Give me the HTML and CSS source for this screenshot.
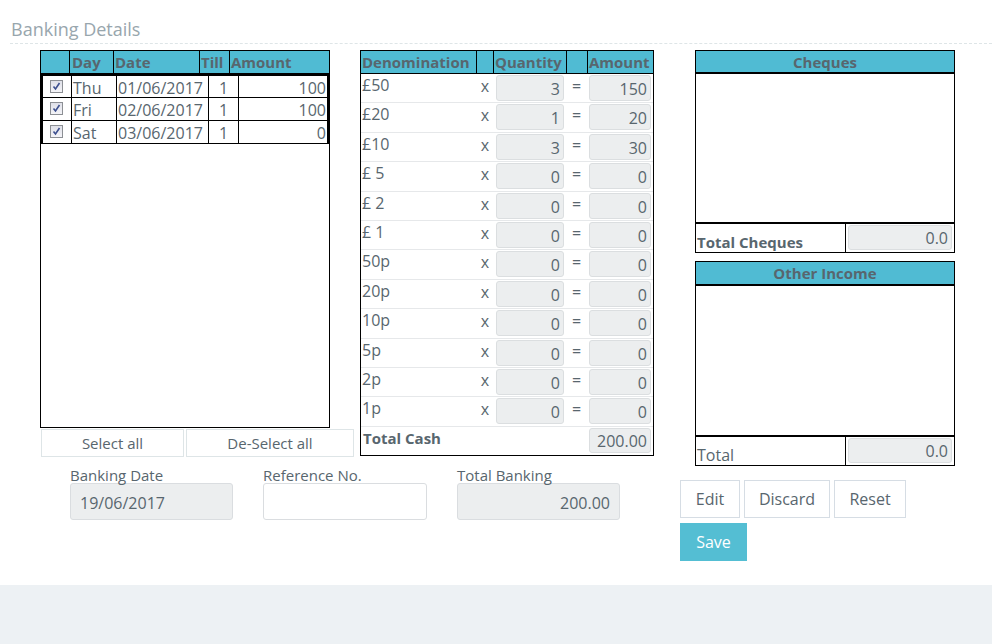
FILE: index.html
```html
<!DOCTYPE html>
<html>
<head>
<meta charset="utf-8">
<link rel="stylesheet" href="styles.css">
</head>
<body>
<div class="page">
  <h2 class="title">Banking Details</h2>
  <div class="main">
    <div class="leftmid">
      <div class="tables">
        <div class="leftcol">
          <div class="days">
            <div class="dhead">
              <div class="c1"></div>
              <div class="c2">Day</div>
              <div class="c3">Date</div>
              <div class="c4">Till</div>
              <div class="c5">Amount</div>
            </div>
            <div class="dbody">
              <div class="drow">
                <div class="b1"><span class="cb"><svg width="11" height="11" viewBox="0 0 11 11"><path d="M2.5 5.5 L4.5 8 L8.5 2" fill="none" stroke="#3c4f8f" stroke-width="1.6"/></svg></span></div>
                <div class="b2">Thu</div>
                <div class="b3">01/06/2017</div>
                <div class="b4">1</div>
                <div class="b5">100</div>
              </div>
              <div class="drow">
                <div class="b1"><span class="cb"><svg width="11" height="11" viewBox="0 0 11 11"><path d="M2.5 5.5 L4.5 8 L8.5 2" fill="none" stroke="#3c4f8f" stroke-width="1.6"/></svg></span></div>
                <div class="b2">Fri</div>
                <div class="b3">02/06/2017</div>
                <div class="b4">1</div>
                <div class="b5">100</div>
              </div>
              <div class="drow">
                <div class="b1"><span class="cb"><svg width="11" height="11" viewBox="0 0 11 11"><path d="M2.5 5.5 L4.5 8 L8.5 2" fill="none" stroke="#3c4f8f" stroke-width="1.6"/></svg></span></div>
                <div class="b2">Sat</div>
                <div class="b3">03/06/2017</div>
                <div class="b4">1</div>
                <div class="b5">0</div>
              </div>
            </div>
          </div>
          <div class="selbtns">
            <button class="sel s1">Select all</button>
            <button class="sel s2">De-Select all</button>
          </div>
        </div>
        <div class="cash">
          <div class="chead">
            <div class="h1">Denomination</div>
            <div class="h2"></div>
            <div class="h3">Quantity</div>
            <div class="h4"></div>
            <div class="h5">Amount</div>
          </div>
          <div class="crow"><span class="den">£50</span><span class="op">x</span><span class="inp q">3</span><span class="op eq">=</span><span class="inp a">150</span></div>
          <div class="crow"><span class="den">£20</span><span class="op">x</span><span class="inp q">1</span><span class="op eq">=</span><span class="inp a">20</span></div>
          <div class="crow"><span class="den">£10</span><span class="op">x</span><span class="inp q">3</span><span class="op eq">=</span><span class="inp a">30</span></div>
          <div class="crow"><span class="den">£ 5</span><span class="op">x</span><span class="inp q">0</span><span class="op eq">=</span><span class="inp a">0</span></div>
          <div class="crow"><span class="den">£ 2</span><span class="op">x</span><span class="inp q">0</span><span class="op eq">=</span><span class="inp a">0</span></div>
          <div class="crow"><span class="den">£ 1</span><span class="op">x</span><span class="inp q">0</span><span class="op eq">=</span><span class="inp a">0</span></div>
          <div class="crow"><span class="den">50p</span><span class="op">x</span><span class="inp q">0</span><span class="op eq">=</span><span class="inp a">0</span></div>
          <div class="crow"><span class="den">20p</span><span class="op">x</span><span class="inp q">0</span><span class="op eq">=</span><span class="inp a">0</span></div>
          <div class="crow"><span class="den">10p</span><span class="op">x</span><span class="inp q">0</span><span class="op eq">=</span><span class="inp a">0</span></div>
          <div class="crow"><span class="den">5p</span><span class="op">x</span><span class="inp q">0</span><span class="op eq">=</span><span class="inp a">0</span></div>
          <div class="crow"><span class="den">2p</span><span class="op">x</span><span class="inp q">0</span><span class="op eq">=</span><span class="inp a">0</span></div>
          <div class="crow"><span class="den">1p</span><span class="op">x</span><span class="inp q">0</span><span class="op eq">=</span><span class="inp a">0</span></div>
          <div class="crow total"><span class="den tc">Total Cash</span><span class="inp a">200.00</span></div>
        </div>
      </div>
      <div class="fields">
        <div class="field">
          <label class="flabel">Banking Date</label>
          <div class="finput ro">19/06/2017</div>
        </div>
        <div class="field wide">
          <label class="flabel">Reference No.</label>
          <div class="finput"></div>
        </div>
        <div class="field">
          <label class="flabel">Total Banking</label>
          <div class="finput ro ralign">200.00</div>
        </div>
      </div>
    </div>
    <div class="rightcol">
      <div class="box">
        <div class="rhead">Cheques</div>
        <div class="rbody"></div>
        <div class="rtotal">
          <div class="rlabel bold">Total Cheques</div>
          <div class="inp rin">0.0</div>
        </div>
      </div>
      <div class="box second">
        <div class="rhead">Other Income</div>
        <div class="rbody"></div>
        <div class="rtotal">
          <div class="rlabel">Total</div>
          <div class="inp rin">0.0</div>
        </div>
      </div>
      <div class="actions">
        <button class="btn w1">Edit</button>
        <button class="btn w2">Discard</button>
        <button class="btn w3">Reset</button>
      </div>
      <button class="save">Save</button>
    </div>
  </div>
</div>
<div class="footer"></div>
</body>
</html>
```
FILE: styles.css
```css
* { box-sizing: border-box; }
body {
  margin: 0;
  font-family: "Open Sans", "Segoe UI", sans-serif;
  color: #58666e;
  font-size: 16px;
  background: #fff;
}
.page { height: 585px; background: #fff; overflow: hidden; }
.footer { height: 59px; background: #edf1f4; }
.title {
  margin: 0 0 0 10px;
  padding: 17px 0 0 1px;
  height: 44px;
  font-size: 18px;
  line-height: 24px;
  font-weight: normal;
  color: #98a6ad;
  border-bottom: 1px dashed #dee5e7;
}
.main { display: flex; padding-left: 40px; margin-top: 6px; }
.leftmid { width: 614px; flex: none; }
.tables { display: flex; gap: 6px; }
.leftcol { width: 314px; }

/* days table */
.days { width: 290px; height: 378px; border: 1px solid #000; }
.dhead {
  display: flex; height: 23px; background: #50bbd3;
  border-bottom: 1px solid #000;
  font-weight: bold; font-size: 15px; line-height: 22px;
}
.dhead > div { border-right: 1px solid #000; padding-left: 1px; white-space: nowrap; }
.dhead .c1 { width: 29px; }
.dhead .c2 { width: 44px; padding-left: 2px; }
.dhead .c3 { width: 86px; }
.dhead .c4 { width: 30px; }
.dhead .c5 { flex: 1; border-right: none; }
.dbody { border: 2px solid #000; border-bottom: none; }
.drow { display: flex; height: 23px; border-bottom: 1px solid #000; line-height: 20px; }
.drow:first-child { height: 22px; }
.drow > div { border-right: 1px solid #000; white-space: nowrap; padding-top: 2px; }
.b1 { width: 29px; padding: 4px 0 0 7px !important; }
.b2 { width: 45px; padding-left: 1px; }
.b3 { width: 92px; padding-left: 1px; }
.b4 { width: 30px; text-align: center; }
.b5 { flex: 1; text-align: right; padding-right: 1px; border-right: none !important; }
.cb {
  display: block; width: 13px; height: 13px;
  border: 1px solid #8c8f94;
  background: linear-gradient(#dfe0e8, #f4f4f8);
}
.cb svg { display: block; }
.selbtns { display: flex; gap: 2px; margin: 1px 0 0 1px; }
.sel {
  height: 28px; background: #fff; border: 1px solid #dee5e7;
  font-family: inherit; font-size: 15px; color: #58666e; padding: 0;
}
.s1 { width: 143px; }
.s2 { width: 168px; }

/* cash table */
.cash { width: 294px; height: 406px; border-left: 1px solid #000; border-right: 1px solid #000; }
.chead {
  display: flex; height: 24px; background: #50bbd3;
  border-top: 1px solid #000; border-bottom: 1px solid #000;
  font-weight: bold; font-size: 15px; line-height: 22px;
  margin: 0 -1px; border-left: 1px solid #000; border-right: 1px solid #000;
}
.chead > div { border-right: 1px solid #000; padding-left: 1px; white-space: nowrap; }
.chead .h1 { width: 116px; }
.chead .h2 { width: 17px; }
.chead .h3 { width: 73px; }
.chead .h4 { width: 21px; }
.chead .h5 { flex: 1; border-right: none; }
.crow {
  display: flex; align-items: flex-start;
  height: 29.4px; border-bottom: 1px solid #e6e8ea;
  line-height: 20px;
}
.den { width: 114px; padding-left: 1px; padding-top: 1px; white-space: nowrap; }
.op { width: 20px; text-align: center; padding-top: 2px; }
.op.eq { width: 25px; }
.inp {
  display: block; height: 26px; margin-top: 1px;
  background: #eceeef; border: 1px solid #dbdee0; border-radius: 3px;
  text-align: right; padding-right: 3px; line-height: 26px;
}
.q { width: 68px; margin-left: 1px; }
.a { width: 62px; }
.crow.total { height: 29px; border-bottom: 1px solid #000; margin: 0 -1px; padding-left: 1px; border-left: 1px solid #000; border-right: 1px solid #000; }
.crow.total .a { height: 25px; margin-left: 113px; line-height: 25px; }
.tc { font-weight: bold; font-size: 15px; width: 114px; }

/* bottom fields */
.fields { display: flex; gap: 30px; padding-left: 30px; margin-top: 10px; }
.field { width: 163px; flex: none; }
.field.wide { width: 164px; }
.flabel { display: block; font-size: 15px; line-height: 16px; white-space: nowrap; }
.finput {
  height: 37px; border: 1px solid #dadde0; border-radius: 3px;
  background: #fff; line-height: 26px; padding: 6px 9px 0;
}
.finput.ro { background: #eceeef; }
.finput.ralign { text-align: right; }

/* right column */
.rightcol { margin-left: 26px; width: 276px; }
.box { margin-left: 15px; width: 260px; border: 1px solid #000; }
.box.second { margin-top: 8px; }
.rhead {
  height: 23px; background: #50bbd3; border-bottom: 2px solid #000;
  text-align: center; font-weight: bold; font-size: 15px; line-height: 22px;
}
.rbody { height: 150px; border-bottom: 2px solid #000; }
.box.second .rhead { height: 24px; line-height: 23px; }
.box.second .rbody { height: 151px; }
.rtotal { display: flex; height: 28px; }
.rlabel { width: 150px; border-right: 1px solid #000; padding: 8px 0 0 1px; line-height: 20px; white-space: nowrap; }
.rlabel.bold { font-weight: bold; font-size: 15px; }
.rin { width: 104px; height: 25px; margin: 1px 0 0 2px; line-height: 24px; }
.actions { display: flex; gap: 4px; margin-top: 14px; }
.btn {
  height: 38px; background: #fff; border: 1px solid #d6dde4;
  font-family: inherit; font-size: 16px; color: #58666e; padding: 0;
}
.w1 { width: 60px; }
.w2 { width: 86px; }
.w3 { width: 72px; }
.save {
  display: block; margin-top: 5px; width: 67px; height: 38px;
  background: #54bed3; border: none; color: #fff;
  font-family: inherit; font-size: 16px; padding: 0;
}
```
